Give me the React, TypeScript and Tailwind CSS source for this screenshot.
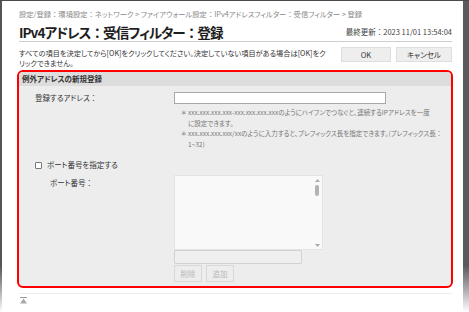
import React from "react";

const F = "font-['Noto_Sans_CJK_JP',sans-serif] [font-feature-settings:'palt']";

function C() {
  return <span className="[font-feature-settings:normal]">：</span>;
}

function TopIcon() {
  return (
    <svg width="7" height="7" viewBox="0 0 7 7" className="block">
      <rect x="0" y="0" width="7" height="1" fill="#9a9a9a" />
      <polygon points="3.5,1.5 7,6.5 0,6.5" fill="#a8a8a8" />
    </svg>
  );
}

export default function App() {
  return (
    <div className={`w-[469px] h-[312px] overflow-hidden bg-white flex border-t border-[#4a4a4a] ${F}`}>
      <div className="w-[2px] shrink-0 bg-gradient-to-b from-[#555] via-[#555] via-85% to-white" />
      <div className="flex-1 pl-[17px] pr-[11px] flex flex-col">
        {/* breadcrumb */}
        <div className="pt-[8px] text-[7.3px] leading-[10px] text-[#8a8a8a] whitespace-nowrap">
          設定/登録<C />環境設定<C />ネットワーク &gt; ファイアウォール設定<C />IPv4アドレスフィルター<C />受信フィルター &gt; 登録
        </div>
        {/* title */}
        <div className="mt-[4px] flex items-center justify-between border-b border-[#cfcfcf] h-[19px]">
          <div className="text-[13.6px] leading-[18px] font-bold text-[#1e1e1e] whitespace-nowrap tracking-[-1px]">
            IPv4アドレス<C />受信フィルター<C />登録
          </div>
          <div className="text-[7.5px] leading-[10px] text-[#444] whitespace-nowrap">
            最終更新<C />2023 11/01 13:54:04
          </div>
        </div>
        {/* description + buttons */}
        <div className="flex justify-between mt-[5px]">
          <div className="pt-[1px] text-[7.2px] leading-[10px] text-[#333] whitespace-nowrap">
            すべての項目を決定してから[OK]をクリックしてください。決定していない項目がある場合は[OK]をク
            <br />
            リックできません。
          </div>
          <div className="flex gap-[5px]">
            <div className="w-[50px] h-[15px] bg-[#eeeeee] border border-[#dedede] flex items-center justify-center text-[7.5px] text-[#333]">
              OK
            </div>
            <div className="w-[56px] h-[15px] bg-[#eeeeee] border border-[#dedede] flex items-center justify-center text-[7.5px] text-[#333]">
              キャンセル
            </div>
          </div>
        </div>
        {/* red box */}
        <div className="mt-[2px] -ml-[2px] -mr-[1px] border-2 border-[#f00] rounded-[6px] bg-[#ededed] overflow-hidden">
          <div className="h-[14px] bg-[#dddddd] pl-[3px] flex items-center text-[7.5px] font-bold text-[#333]">
            例外アドレスの新規登録
          </div>
          <div className="flex mt-[6px]">
            <div className="w-[155px] pl-[16px] text-[7.5px] leading-[12px] text-[#333]">登録するアドレス<C /></div>
            <div className="w-[212px] h-[12px] bg-white border border-[#a8a8a8]" />
          </div>
          <div className="ml-[162px] mt-[3px] text-[6.5px] leading-[10.5px] text-[#777] whitespace-nowrap">
            <div className="flex">
              <span className="w-[7px]">＊</span>
              <span>
                xxx.xxx.xxx.xxx-xxx.xxx.xxx.xxxのようにハイフンでつなぐと、連続するIPアドレスを一度
                <br />
                に設定できます。
              </span>
            </div>
            <div className="flex">
              <span className="w-[7px]">＊</span>
              <span>
                xxx.xxx.xxx.xxx/xxのように入力すると、プレフィックス長を指定できます。(プレフィックス長<C />
                <br />
                1~32)
              </span>
            </div>
          </div>
          <div className="flex items-center mt-[11px] pl-[16px]">
            <div className="w-[7px] h-[7px] border border-[#777] bg-white rounded-[1px]" />
            <span className="ml-[5px] text-[7.5px] leading-[10px] text-[#333]">ポート番号を指定する</span>
          </div>
          <div className="flex mt-[5px]">
            <div className="w-[155px] pl-[31px] pt-[3px] text-[7.5px] leading-[10px] text-[#333]">ポート番号<C /></div>
            <div className="flex flex-col">
              <div className="w-[149px] h-[75px] bg-[#f9f9f9] border border-[#e4e4e4] flex justify-end">
                <div className="w-[8px] flex flex-col items-center pt-[3px] pb-[2px] mr-[1px]">
                  <svg width="5" height="3" viewBox="0 0 5 3"><polygon points="2.5,0 5,3 0,3" fill="#aaa" /></svg>
                  <div className="w-[4px] h-[11px] bg-[#b3b3b3] rounded-[2px] mt-[3px]" />
                  <div className="flex-1" />
                  <svg width="5" height="3" viewBox="0 0 5 3"><polygon points="0,0 5,0 2.5,3" fill="#aaa" /></svg>
                </div>
              </div>
              <div className="w-[128px] h-[14px] bg-[#efefef] border border-[#d2d2d2] rounded-[1px]" />
              <div className="flex gap-[4px] mt-[1px] pb-[4px]">
                <div className="w-[28px] h-[17px] bg-[#ededed] border border-[#d8d8d8] flex items-center justify-center text-[7.5px] text-[#b8b8b8]">削除</div>
                <div className="w-[28px] h-[17px] bg-[#ededed] border border-[#d8d8d8] flex items-center justify-center text-[7.5px] text-[#b8b8b8]">追加</div>
              </div>
            </div>
          </div>
        </div>
        <div className="mt-[5px] border-t border-[#ececec]" />
        <div className="mt-[3px] ml-[1px]">
          <TopIcon />
        </div>
      </div>
      <div className="w-[6px] shrink-0 bg-gradient-to-b from-[#5a5a5a] via-[#5a5a5a] via-85% to-white" />
    </div>
  );
}
